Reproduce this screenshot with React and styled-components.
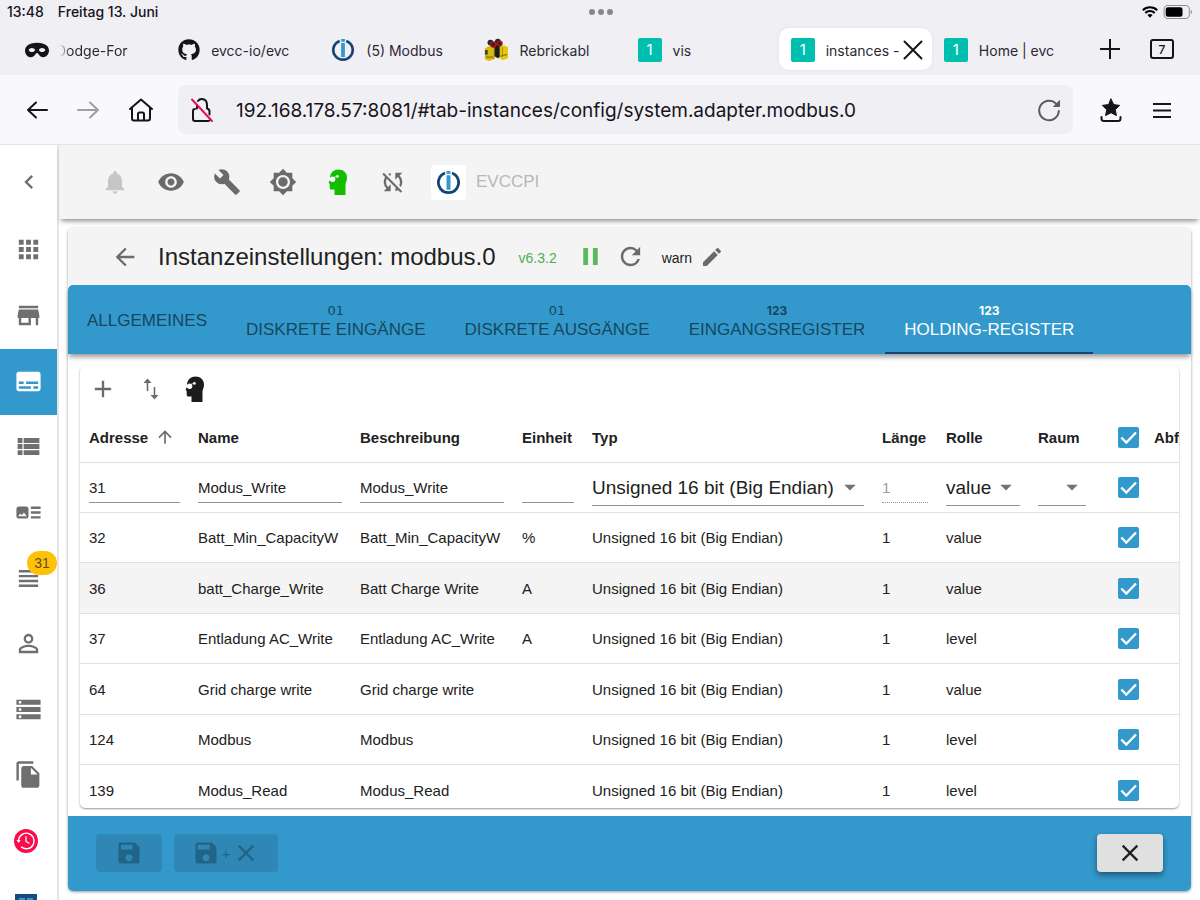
import React, { useState } from 'react';
import styled, { createGlobalStyle } from 'styled-components';
import { FaMask, FaGithub } from 'react-icons/fa';
import {
  MdNotifications, MdVisibility, MdBuild, MdSyncDisabled, MdChevronLeft,
  MdApps, MdStore, MdSubtitles, MdArtTrack, MdViewHeadline,
  MdPersonOutline, MdStorage, MdFileCopy, MdPause, MdRefresh, MdEdit, MdArrowBack,
  MdArrowUpward, MdAdd, MdSave, MdClose, MdArrowDropDown,
} from 'react-icons/md';

const BLUE = '#3399cc';

const columns = [
  { label: 'Adresse', width: 109, sorted: true },
  { label: 'Name', width: 162 },
  { label: 'Beschreibung', width: 162 },
  { label: 'Einheit', width: 70 },
  { label: 'Typ' },
  { label: 'Länge', width: 64 },
  { label: 'Rolle', width: 92 },
  { label: 'Raum', width: 66 },
];

const TYPE = 'Unsigned 16 bit (Big Endian)';

const registers = [
  { address: '32', name: 'Batt_Min_CapacityW', desc: 'Batt_Min_CapacityW', unit: '%', role: 'value' },
  { address: '36', name: 'batt_Charge_Write', desc: 'Batt Charge Write', unit: 'A', role: 'value', hover: true },
  { address: '37', name: 'Entladung AC_Write', desc: 'Entladung AC_Write', unit: 'A', role: 'level' },
  { address: '64', name: 'Grid charge write', desc: 'Grid charge write', unit: '', role: 'value' },
  { address: '124', name: 'Modbus', desc: 'Modbus', unit: '', role: 'level' },
  { address: '139', name: 'Modus_Read', desc: 'Modus_Read', unit: '', role: 'level' },
];

const configTabs = [
  { label: 'Allgemeines' },
  { label: 'Diskrete Eingänge', bits: true },
  { label: 'Diskrete Ausgänge', bits: true },
  { label: 'Eingangsregister', digits: true },
  { label: 'Holding-Register', digits: true },
];

/* ---------- drawings ---------- */

const BrokerLogo = ({ size = 24 }) => (
  <svg width={size} height={size} viewBox="0 0 24 24" fill="none">
    <path d="M8.700 2.900A9.700 9.700 0 1 0 15.300 2.900" stroke="#164477" strokeWidth="2.700" />
    <rect x="10.100" y="5" width="3.800" height="14" fill={BLUE} />
    <rect x="10.100" y="1" width="3.800" height="2.700" fill={BLUE} />
  </svg>
);

const Bricks = () => (
  <svg width="24" height="26" viewBox="0 0 26 26">
    <path d="M9 7h9l2 12-5 3-5-3z" fill="#1d1b1b" />
    <path d="M1 11l4-2 6 1v13l-6 2-4-2z" fill="#d9b90b" />
    <path d="M17 9l5-1 4 2v12l-6 2-3-2z" fill="#e5c70f" />
    <path d="M1 13h3v5H1z" fill="#3b4048" />
    <path d="M2 20h8v1.500H2zM18 19l7-2v1.500l-7 2z" fill="#8d7406" />
    <path d="M11 10v13M20 10v9" stroke="#a78b08" fill="none" />
    <circle cx="7" cy="5" r="3.200" fill="#2b2728" />
    <circle cx="15" cy="4" r="3.200" fill="#2b2728" />
    <circle cx="10" cy="7" r="2.800" fill="#2b2728" stroke="#b3141b" strokeWidth="1.400" />
    <circle cx="17" cy="6" r="2.600" fill="#2b2728" stroke="#b3141b" strokeWidth="1.400" />
  </svg>
);

const Expert = ({ color }) => (
  <svg width="20" height="27" viewBox="0 0 20 27">
    <path d="M10.5.5C15.500.5 19 4 19 8.500c0 2.800-.9 4.300-1.500 6.500V26H6.500v-5.500H3.500c-1.200 0-1.800-.7-1.800-1.800V15L.6 13.800l1.400-3V8C2.500 3.500 6 .5 10.500.5z" fill={color} />
    <circle cx="4.600" cy="10.200" r="2.700" fill="#fff" />
    <circle cx="9.400" cy="7.400" r="1.300" fill="#fff" />
    <path d="M.5 9l2 .8M5.500 8.500l3.500-1.200" stroke="#fff" strokeWidth=".7" />
  </svg>
);

const ThemeIcon = () => (
  <svg width="28" height="28" viewBox="0 0 24 24" fill="currentColor">
    <path d="M20 8.690V4h-4.690L12 .690 8.690 4H4v4.690L.690 12 4 15.310V20h4.690L12 23.310 15.310 20H20v-4.690L23.310 12 20 8.690zM12 18c-3.310 0-6-2.690-6-6s2.690-6 6-6 6 2.690 6 6-2.690 6-6 6zm0-10c-2.210 0-4 1.790-4 4s1.790 4 4 4 4-1.790 4-4-1.790-4-4-4z" />
  </svg>
);

const ViewList = () => (
  <svg width="29" height="29" viewBox="0 0 24 24" fill="currentColor">
    <path d="M3 14h4v-4H3zM3 19h4v-4H3zM3 9h4V5H3zM8 14h13v-4H8zM8 19h13v-4H8zM8 5v4h13V5z" />
  </svg>
);

const SwapRows = () => (
  <svg width="20" height="24" viewBox="0 0 20 24" fill="currentColor">
    <path d="M6.500 1.500l4 4.500H7.300V14H5.700V6H2.500zM12.700 10h1.600v8h3.200l-4 4.500-4-4.500h3.200z" />
  </svg>
);

const History = () => (
  <svg width="24" height="24" viewBox="0 0 24 24" fill="none">
    <circle cx="12" cy="12" r="12" fill="#fb0d4b" />
    <path d="M4.500 12a7.800 7.800 0 1 1 2.700 5.900" stroke="#fff" strokeWidth="1.400" />
    <path d="M2.500 11h4.200l-2.100 3z" fill="#fff" />
    <path d="M12 7v5.500l3.500 2" stroke="#fff" strokeWidth="1.200" />
  </svg>
);

const PanelLogo = () => (
  <svg width="22" height="24" viewBox="0 0 22 24">
    <path d="M0 0h22v24H0z" fill="#174a80" />
    <path d="M4 4h6v8H4zM12 4h6v8h-6z" fill={BLUE} />
  </svg>
);

const strokeProps = { fill: 'none', stroke: 'currentColor', strokeWidth: 2, strokeLinecap: 'round', strokeLinejoin: 'round' };

const ArrowLeft = () => (
  <svg width="24" height="24" viewBox="0 0 24 24" {...strokeProps}><path d="M22 12H3M11 4.500L3 12l8 7.500" /></svg>
);
const ArrowRight = () => (
  <svg width="24" height="24" viewBox="0 0 24 24" {...strokeProps}><path d="M2 12h20M14 4.500l8 7.500-8 7.500" /></svg>
);
const House = () => (
  <svg width="28" height="26" viewBox="0 0 28 26" {...strokeProps}>
    <path d="M3 12L14 2.500 25 12M5 11v10.500A2 2 0 0 0 7 23.500h14a2 2 0 0 0 2-2V11M11 23.500V17a1.500 1.500 0 0 1 1.500-1.500h3A1.500 1.500 0 0 1 17 17v6.500" />
  </svg>
);
const NoLock = () => (
  <svg width="24" height="26" viewBox="0 0 24 26" {...strokeProps}>
    <path d="M8 4C10 1 17 1 17 8v3.500M7 8v3.500M5 12a2 2 0 0 0-2 2v8a2 2 0 0 0 2 2h13a2 2 0 0 0 1.500-.7M17 11.500a3 3 0 0 1 2.500 3v3" />
    <path d="M2 2.500L22 24" stroke="#e4114b" />
  </svg>
);
const Reload = () => (
  <svg width="24" height="24" viewBox="0 0 24 24" {...strokeProps}>
    <path d="M19.800 6.500A9.800 9.800 0 1 0 21.800 13" />
    <path d="M22.500 3v5.500H17z" fill="currentColor" strokeWidth="1" />
  </svg>
);
const Bookmark = () => (
  <svg width="22" height="26" viewBox="0 0 22 26" {...strokeProps}>
    <path d="M11 2l2.700 5.600 6 .8-4.400 4.200 1.100 6L11 15.700l-5.400 2.900 1.100-6-4.400-4.200 6-.8z" fill="currentColor" strokeWidth="1" />
    <path d="M1.500 20v1.500A2.500 2.500 0 0 0 4 24h14a2.500 2.500 0 0 0 2.500-2.500V20" />
  </svg>
);
const Burger = () => (
  <svg width="20" height="16" viewBox="0 0 20 16" {...strokeProps} strokeLinecap="butt"><path d="M1 2h18M1 8.500h18M1 15h18" /></svg>
);
const Plus = () => (
  <svg width="20" height="20" viewBox="0 0 20 20" {...strokeProps} strokeLinecap="butt"><path d="M10 0v20M0 10h20" /></svg>
);
const Cross = () => (
  <svg width="20" height="20" viewBox="0 0 20 20" {...strokeProps}><path d="M1.500 1.500l17 17M18.500 1.500l-17 17" /></svg>
);
const Wifi = () => (
  <svg width="16" height="12" viewBox="0 0 16 12" fill="none" stroke="#000" strokeWidth="2.100">
    <path d="M.8 4.300a10.200 10.200 0 0 1 14.400 0M3.300 6.900a6.600 6.600 0 0 1 9.400 0" />
    <path d="M8 8a4 4 0 0 1 2.600 1L8 11.700 5.400 9A4 4 0 0 1 8 8z" fill="#000" stroke="none" />
  </svg>
);
const Battery = () => (
  <svg width="31" height="14" viewBox="0 0 32 15">
    <rect x=".6" y=".6" width="27" height="13.800" rx="4" fill="none" stroke="#8e8e92" strokeWidth="1.100" />
    <rect x="2.300" y="2.300" width="18" height="10.400" rx="2.300" fill="#000" />
    <path d="M29.200 5.200c1.700.6 1.700 4 0 4.600z" fill="#8e8e92" />
  </svg>
);

/* ---------- browser frame ---------- */

const GlobalStyle = createGlobalStyle`
  * { box-sizing: border-box; }
  body { margin: 0; }
  button, input, select { font: inherit; color: inherit; }
  svg { display: block; flex: none; }
`;

const Screen = styled.div`
  height: 100vh;
  display: flex;
  flex-direction: column;
  overflow: hidden;
  background: #fff;
  color: #212121;
  font-family: "Liberation Sans", Arial, sans-serif;
  font-size: 15px;
`;

const Chrome = styled.header`
  background: #f0eff4;
  color: #15141a;
  font-family: Inter, sans-serif;
`;

const StatusBar = styled.div`
  display: grid;
  grid-template-columns: 1fr auto 1fr;
  align-items: center;
  height: 23px;
  padding: 0 6px 0 7px;
  font-size: 14px;
  font-weight: 500;
`;

const Clock = styled.div`
  display: flex;
  gap: 14px;
`;

const Dots = styled.div`
  display: flex;
  gap: 3px;
  span {
    width: 6px;
    height: 6px;
    border-radius: 50%;
    background: #87878b;
  }
`;

const StatusIcons = styled.div`
  display: flex;
  align-items: center;
  justify-content: flex-end;
  gap: 5px;
`;

const TabStrip = styled.nav`
  display: flex;
  align-items: center;
  height: 52px;
  padding: 0 26px 0 13px;
`;

const BrowserTab = styled.div`
  flex: 1;
  min-width: 0;
  display: flex;
  align-items: center;
  gap: 11px;
  height: 42px;
  padding: 2px 9px 0 12px;
  border-radius: 10px;
  background: ${(p) => (p.$active ? '#fff' : 'transparent')};
  box-shadow: ${(p) => (p.$active ? '0 0 4px rgba(0,0,0,.06)' : 'none')};
`;

const TabTitle = styled.a`
  flex: ${(p) => (p.$active ? '1' : '0 1 auto')};
  margin-left: ${(p) => (p.$faded ? '-4px' : '0')};
  color: #2b2a33;
  font-size: 14px;
  white-space: nowrap;
  text-decoration: none;
  mask-image: ${(p) => (p.$faded ? 'linear-gradient(90deg, transparent 4px, #000 14px)' : 'none')};
`;

const Badge = styled.span`
  flex: none;
  width: 24px;
  height: 24px;
  border-radius: 2px;
  background: #00bfae;
  color: #fff;
  font-size: 15px;
  line-height: 24px;
  text-align: center;
`;

const PlainButton = styled.button`
  display: flex;
  align-items: center;
  justify-content: center;
  flex: none;
  border: 0;
  padding: 0;
  background: none;
  color: ${(p) => p.$color || 'inherit'};
  cursor: pointer;
`;

const CloseTab = styled(PlainButton)`
  margin-left: -8px;
`;

const StripActions = styled.div`
  display: flex;
  align-items: center;
  gap: 30px;
  padding-left: 15px;
`;

const TabCount = styled(PlainButton)`
  width: 24px;
  height: 20px;
  border: 2px solid #15141a;
  border-radius: 3px;
  font-size: 12px;
  font-weight: 500;
`;

const NavBar = styled.div`
  display: flex;
  align-items: center;
  height: 70px;
  padding: 0 28px 0 25px;
  gap: 27px;
  background: #f9f9fb;
  border-bottom: 1px solid #e3e3e9;
`;

const UrlBox = styled.label`
  flex: 1;
  display: flex;
  align-items: center;
  gap: 22px;
  height: 49px;
  padding: 0 12px;
  margin-left: -4px;
  border-radius: 8px;
  background: #f0eff4;
`;

const UrlInput = styled.input`
  flex: 1;
  min-width: 0;
  border: 0;
  padding: 2px 0 0;
  outline: 0;
  background: none;
  font-size: 19px;
`;

const NavActions = styled.div`
  display: flex;
  align-items: center;
  gap: 30px;
`;

/* ---------- admin frame ---------- */

const Admin = styled.div`
  flex: 1;
  min-height: 0;
  display: flex;
`;

const Sidebar = styled.aside`
  flex: none;
  width: 59px;
  display: flex;
  flex-direction: column;
  overflow: hidden;
  border-right: 2px solid #e5e5e5;
  color: #6f6f6f;
`;

const Collapse = styled(PlainButton)`
  height: 73px;
  width: 100%;
`;

const SideList = styled.ul`
  flex: 1;
  display: flex;
  flex-direction: column;
  list-style: none;
  margin: 0 0 -40px;
  padding: 0;
`;

const SideItem = styled.li`
  flex: 1;
  display: flex;
  background: ${(p) => (p.$active ? BLUE : 'transparent')};
  color: ${(p) => (p.$active ? '#fff' : 'inherit')};
`;

const SideLink = styled.a`
  flex: 1;
  position: relative;
  display: flex;
  align-items: center;
  justify-content: center;
  padding: 0 ${(p) => (p.$adapter ? 5 : 1)}px 2px 0;
  color: inherit;
`;

const Count = styled.span`
  position: absolute;
  top: 5px;
  right: 0;
  width: 30px;
  border-radius: 12px;
  background: #ffc107;
  color: #5f4e1c;
  font-size: 14px;
  line-height: 24px;
  text-align: center;
`;

const Main = styled.main`
  flex: 1;
  min-width: 0;
  display: flex;
  flex-direction: column;
`;

const AppBar = styled.div`
  position: relative;
  display: flex;
  align-items: center;
  gap: 28px;
  height: 74px;
  padding-left: 42px;
  background: #f4f4f4;
  color: #6b6b6b;
  box-shadow: 0 4px 5px -2px rgba(0, 0, 0, .45);
`;

const ExpertButton = styled(PlainButton)`
  width: 26px;
`;

const Host = styled.div`
  display: flex;
  align-items: center;
  gap: 10px;
  margin-left: -4px;
  color: #b7b7b7;
  font-size: 17px;
`;

const LogoTile = styled.div`
  padding: 5px;
  border-radius: 4px;
  background: #fff;
`;

const Card = styled.section`
  flex: 1;
  min-height: 0;
  display: flex;
  flex-direction: column;
  margin: 9px;
  border-radius: 5px;
  background: #fff;
  box-shadow: 0 1px 3px rgba(0, 0, 0, .4);
`;

const TitleBar = styled.div`
  display: flex;
  align-items: center;
  height: 57px;
  padding-left: 43px;
  gap: 17px;
  border-radius: 5px 5px 0 0;
  background: #f4f4f4;
  color: #6b6b6b;
`;

const Title = styled.h1`
  margin: 0 6px 0 2px;
  color: #212121;
  font-size: 24px;
  font-weight: 400;
`;

const Version = styled.span`
  padding-top: 2px;
  color: #4caf50;
  font-size: 14px;
`;

const RunControls = styled.div`
  display: flex;
  align-items: center;
  gap: 11px;
  padding-left: 2px;
`;

const LogLevel = styled.span`
  padding-top: 2px;
  color: #212121;
  font-size: 14px;
`;

const EditLevel = styled(PlainButton)`
  margin-left: -9px;
`;

const Tabs = styled.div`
  position: relative;
  display: flex;
  gap: 1px;
  height: 69px;
  border-radius: 5px 5px 0 0;
  background: ${BLUE};
  box-shadow: 0 4px 5px -1px rgba(0, 0, 0, .4);
`;

const Tab = styled.button`
  display: flex;
  flex-direction: column;
  align-items: center;
  justify-content: center;
  border: 0;
  border-bottom: 2px solid ${(p) => (p.$active ? '#164477' : 'transparent')};
  padding: 4px 19px 0;
  background: none;
  color: ${(p) => (p.$active ? '#fff' : '#17475e')};
  font-size: 17px;
  line-height: 20px;
  text-transform: uppercase;
  cursor: pointer;
`;

const Bits = styled.span`
  font-family: "DejaVu Sans", sans-serif;
  font-size: 13px;
  line-height: 18px;
`;

const Digits = styled.span`
  font-family: Inter, sans-serif;
  font-size: 12px;
  font-weight: 700;
  line-height: 18px;
`;

const Panel = styled.div`
  flex: 1;
  min-height: 0;
  margin: 12px 12px 8px;
  overflow: hidden;
  border-radius: 5px;
  background: #fff;
  box-shadow: 0 1px 2px rgba(0, 0, 0, .4);
`;

const Tools = styled.div`
  display: flex;
  align-items: center;
  gap: 24px;
  height: 46px;
  padding-left: 9px;
  color: #6b6b6b;
`;

const Table = styled.table`
  width: 100%;
  table-layout: fixed;
  border-collapse: separate;
  border-spacing: 0;
`;

const HeadCell = styled.th`
  height: 51px;
  padding: 0 9px;
  border-bottom: 1px solid #e0e0e0;
  text-align: left;
  font-weight: 700;
  white-space: nowrap;
`;

const SortLabel = styled.span`
  display: flex;
  align-items: center;
  gap: 7px;
  svg { color: #6b6b6b; }
`;

const Row = styled.tr`
  height: ${(p) => (p.$editing ? 50 : 51)}px;
  background: ${(p) => (p.$hover ? '#f4f4f4' : 'transparent')};
  &:nth-child(even) { height: 50px; }
`;

const Cell = styled.td`
  padding: 0 9px;
  border-bottom: 1px solid #e0e0e0;
  white-space: nowrap;
`;

const CheckCell = styled(Cell)`
  padding: 0 0 0 23px;
`;

const Field = styled.input`
  display: block;
  width: 100%;
  height: 31px;
  border: 0;
  border-bottom: 1px solid #949494;
  padding: 0;
  outline: 0;
  background: none;
  &:disabled {
    border-bottom-style: dotted;
    color: #9e9e9e;
  }
`;

const SelectWrap = styled.div`
  display: grid;
  align-items: center;
  border-bottom: 1px solid #949494;
  font-size: 19px;
  > * { grid-area: 1 / 1; }
  svg {
    justify-self: end;
    color: #757575;
    pointer-events: none;
  }
`;

const Select = styled.select`
  appearance: none;
  width: 100%;
  height: 36px;
  border: 0;
  padding: 0 24px 0 0;
  outline: 0;
  background: none;
`;

const CheckWrap = styled.label`
  display: grid;
  width: 21px;
  height: 21px;
  > * { grid-area: 1 / 1; }
`;

const CheckInput = styled.input`
  appearance: none;
  margin: 0;
  border: 2px solid #757575;
  border-radius: 2px;
  &:checked {
    border-color: ${BLUE};
    background: ${BLUE};
  }
  & + svg { visibility: hidden; pointer-events: none; }
  &:checked + svg { visibility: visible; }
`;

const Footer = styled.footer`
  display: flex;
  align-items: center;
  gap: 12px;
  height: 75px;
  padding: 0 28px 1px;
  border-radius: 0 0 5px 5px;
  background: ${BLUE};
`;

const FooterButton = styled.button`
  display: flex;
  align-items: center;
  justify-content: center;
  gap: 2px;
  width: ${(p) => (p.$wide ? 104 : 66)}px;
  height: 38px;
  border: 0;
  border-radius: 4px;
  background: #e0e0e0;
  color: #212121;
  box-shadow: 0 3px 6px rgba(0, 0, 0, .45);
  &:last-child { margin-left: auto; }
  &:disabled {
    background: #2e87b4;
    color: #226485;
    box-shadow: none;
  }
`;

function Check({ label }) {
  const [checked, setChecked] = useState(true);
  return (
    <CheckWrap>
      <CheckInput type="checkbox" aria-label={label} checked={checked} onChange={() => setChecked(!checked)} />
      <svg width="21" height="21" viewBox="0 0 21 21" fill="none" stroke="#fff" strokeWidth="2.300">
        <path d="M3.300 10.500l5 5L18 5.500" />
      </svg>
    </CheckWrap>
  );
}

function Dropdown({ label, value }) {
  return (
    <SelectWrap>
      <Select aria-label={label} defaultValue={value}>
        <option value={value}>{value}</option>
      </Select>
      <MdArrowDropDown size={28} />
    </SelectWrap>
  );
}

function Browser() {
  return (
    <Chrome>
      <StatusBar>
        <Clock><span>13:48</span><span>Freitag 13. Juni</span></Clock>
        <Dots><span /><span /><span /></Dots>
        <StatusIcons><Wifi /><Battery /></StatusIcons>
      </StatusBar>
      <TabStrip>
        <BrowserTab><FaMask size={24} /><TabTitle href="#dodge" $faded>Dodge-For</TabTitle></BrowserTab>
        <BrowserTab><FaGithub size={22} /><TabTitle href="#evcc">evcc-io/evc</TabTitle></BrowserTab>
        <BrowserTab><BrokerLogo /><TabTitle href="#modbus">(5) Modbus</TabTitle></BrowserTab>
        <BrowserTab><Bricks /><TabTitle href="#rebrickable">Rebrickabl</TabTitle></BrowserTab>
        <BrowserTab><Badge>1</Badge><TabTitle href="#vis">vis</TabTitle></BrowserTab>
        <BrowserTab $active>
          <Badge>1</Badge>
          <TabTitle href="#instances" $active>instances -</TabTitle>
          <CloseTab aria-label="Tab schließen"><Cross /></CloseTab>
        </BrowserTab>
        <BrowserTab><Badge>1</Badge><TabTitle href="#home">Home | evc</TabTitle></BrowserTab>
        <StripActions>
          <PlainButton aria-label="Neuer Tab"><Plus /></PlainButton>
          <TabCount>7</TabCount>
        </StripActions>
      </TabStrip>
      <NavBar>
        <PlainButton aria-label="Zurück"><ArrowLeft /></PlainButton>
        <PlainButton aria-label="Vorwärts" $color="#a09fa5"><ArrowRight /></PlainButton>
        <PlainButton aria-label="Startseite"><House /></PlainButton>
        <UrlBox>
          <NoLock />
          <UrlInput aria-label="Adresse" defaultValue="192.168.178.57:8081/#tab-instances/config/system.adapter.modbus.0" />
          <PlainButton aria-label="Neu laden" $color="#5b5b66"><Reload /></PlainButton>
        </UrlBox>
        <NavActions>
          <PlainButton aria-label="Lesezeichen"><Bookmark /></PlainButton>
          <PlainButton aria-label="Menü"><Burger /></PlainButton>
        </NavActions>
      </NavBar>
    </Chrome>
  );
}

const sideItems = [
  { name: 'Übersicht', icon: <MdApps size={29} /> },
  { name: 'Adapter', icon: <MdStore size={29} /> },
  { name: 'Instanzen', icon: <MdSubtitles size={29} />, active: true },
  { name: 'Objekte', icon: <ViewList /> },
  { name: 'Aufzählungen', icon: <MdArtTrack size={29} /> },
  { name: 'Protokolle', icon: <MdViewHeadline size={29} />, count: 31 },
  { name: 'Benutzer', icon: <MdPersonOutline size={29} /> },
  { name: 'Hosts', icon: <MdStorage size={29} /> },
  { name: 'Dateien', icon: <MdFileCopy size={29} /> },
  { name: 'Backup', icon: <History />, adapter: true },
  { name: 'Geräte', icon: <PanelLogo />, adapter: true },
];

function Menu() {
  return (
    <Sidebar>
      <Collapse aria-label="Menü einklappen"><MdChevronLeft size={28} /></Collapse>
      <SideList>
        {sideItems.map((item) => (
          <SideItem key={item.name} $active={item.active}>
            <SideLink href="#tab" aria-label={item.name} $adapter={item.adapter}>
              {item.icon}
              {item.count && <Count>{item.count}</Count>}
            </SideLink>
          </SideItem>
        ))}
      </SideList>
    </Sidebar>
  );
}

function RegisterTable() {
  return (
    <Table>
      <colgroup>
        {columns.map((c) => <col key={c.label} width={c.width} />)}
        <col width={50} />
        <col width={34} />
      </colgroup>
      <thead>
        <tr>
          {columns.map((c) => (
            <HeadCell key={c.label}>
              {c.sorted ? <SortLabel>{c.label}<MdArrowUpward size={20} /></SortLabel> : c.label}
            </HeadCell>
          ))}
          <CheckCell as="th"><Check label="Alle" /></CheckCell>
          <HeadCell>Abf</HeadCell>
        </tr>
      </thead>
      <tbody>
        <Row $editing>
          <Cell><Field aria-label="Adresse" defaultValue="31" /></Cell>
          <Cell><Field aria-label="Name" defaultValue="Modus_Write" /></Cell>
          <Cell><Field aria-label="Beschreibung" defaultValue="Modus_Write" /></Cell>
          <Cell><Field aria-label="Einheit" defaultValue="" /></Cell>
          <Cell><Dropdown label="Typ" value={TYPE} /></Cell>
          <Cell><Field aria-label="Länge" defaultValue="1" disabled /></Cell>
          <Cell><Dropdown label="Rolle" value="value" /></Cell>
          <Cell><Dropdown label="Raum" value="" /></Cell>
          <CheckCell><Check label="31" /></CheckCell>
          <Cell />
        </Row>
        {registers.map((r) => (
          <Row key={r.address} $hover={r.hover}>
            <Cell>{r.address}</Cell>
            <Cell>{r.name}</Cell>
            <Cell>{r.desc}</Cell>
            <Cell>{r.unit}</Cell>
            <Cell>{TYPE}</Cell>
            <Cell>1</Cell>
            <Cell>{r.role}</Cell>
            <Cell />
            <CheckCell><Check label={r.address} /></CheckCell>
            <Cell />
          </Row>
        ))}
      </tbody>
    </Table>
  );
}

function App() {
  const [tab, setTab] = useState(4);

  return (
    <Screen>
      <GlobalStyle />
      <Browser />
      <Admin>
        <Menu />
        <Main>
          <AppBar>
            <PlainButton aria-label="Benachrichtigungen" $color="#c6c6c6"><MdNotifications size={28} /></PlainButton>
            <PlainButton aria-label="Sichtbarkeit"><MdVisibility size={28} /></PlainButton>
            <PlainButton aria-label="Einstellungen"><MdBuild size={28} /></PlainButton>
            <PlainButton aria-label="Farbschema"><ThemeIcon /></PlainButton>
            <ExpertButton aria-label="Expertenmodus"><Expert color="#14bd00" /></ExpertButton>
            <PlainButton aria-label="Synchronisierung"><MdSyncDisabled size={28} /></PlainButton>
            <Host><LogoTile><BrokerLogo size={25} /></LogoTile>EVCCPI</Host>
          </AppBar>
          <Card>
            <TitleBar>
              <PlainButton aria-label="Zurück"><MdArrowBack size={28} /></PlainButton>
              <Title>Instanzeinstellungen: modbus.0</Title>
              <Version>v6.3.2</Version>
              <RunControls>
                <PlainButton aria-label="Anhalten" $color="#5cb85f"><MdPause size={29} /></PlainButton>
                <PlainButton aria-label="Neustart"><MdRefresh size={29} /></PlainButton>
              </RunControls>
              <LogLevel>warn</LogLevel>
              <EditLevel aria-label="Loglevel"><MdEdit size={24} /></EditLevel>
            </TitleBar>
            <Tabs role="tablist">
              {configTabs.map((t, i) => (
                <Tab key={t.label} role="tab" aria-selected={i === tab} $active={i === tab} onClick={() => setTab(i)}>
                  {t.bits && <Bits>01</Bits>}
                  {t.digits && <Digits>123</Digits>}
                  <span>{t.label}</span>
                </Tab>
              ))}
            </Tabs>
            <Panel>
              <Tools>
                <PlainButton aria-label="Hinzufügen"><MdAdd size={28} /></PlainButton>
                <PlainButton aria-label="Sortieren"><SwapRows /></PlainButton>
                <PlainButton aria-label="Expertenmodus"><Expert color="#1c1c1c" /></PlainButton>
              </Tools>
              <RegisterTable />
            </Panel>
            <Footer>
              <FooterButton disabled aria-label="Speichern"><MdSave size={28} /></FooterButton>
              <FooterButton disabled $wide aria-label="Speichern und schließen"><MdSave size={28} />+<MdClose size={28} /></FooterButton>
              <FooterButton aria-label="Schließen"><MdClose size={28} /></FooterButton>
            </Footer>
          </Card>
        </Main>
      </Admin>
    </Screen>
  );
}

export default App;
